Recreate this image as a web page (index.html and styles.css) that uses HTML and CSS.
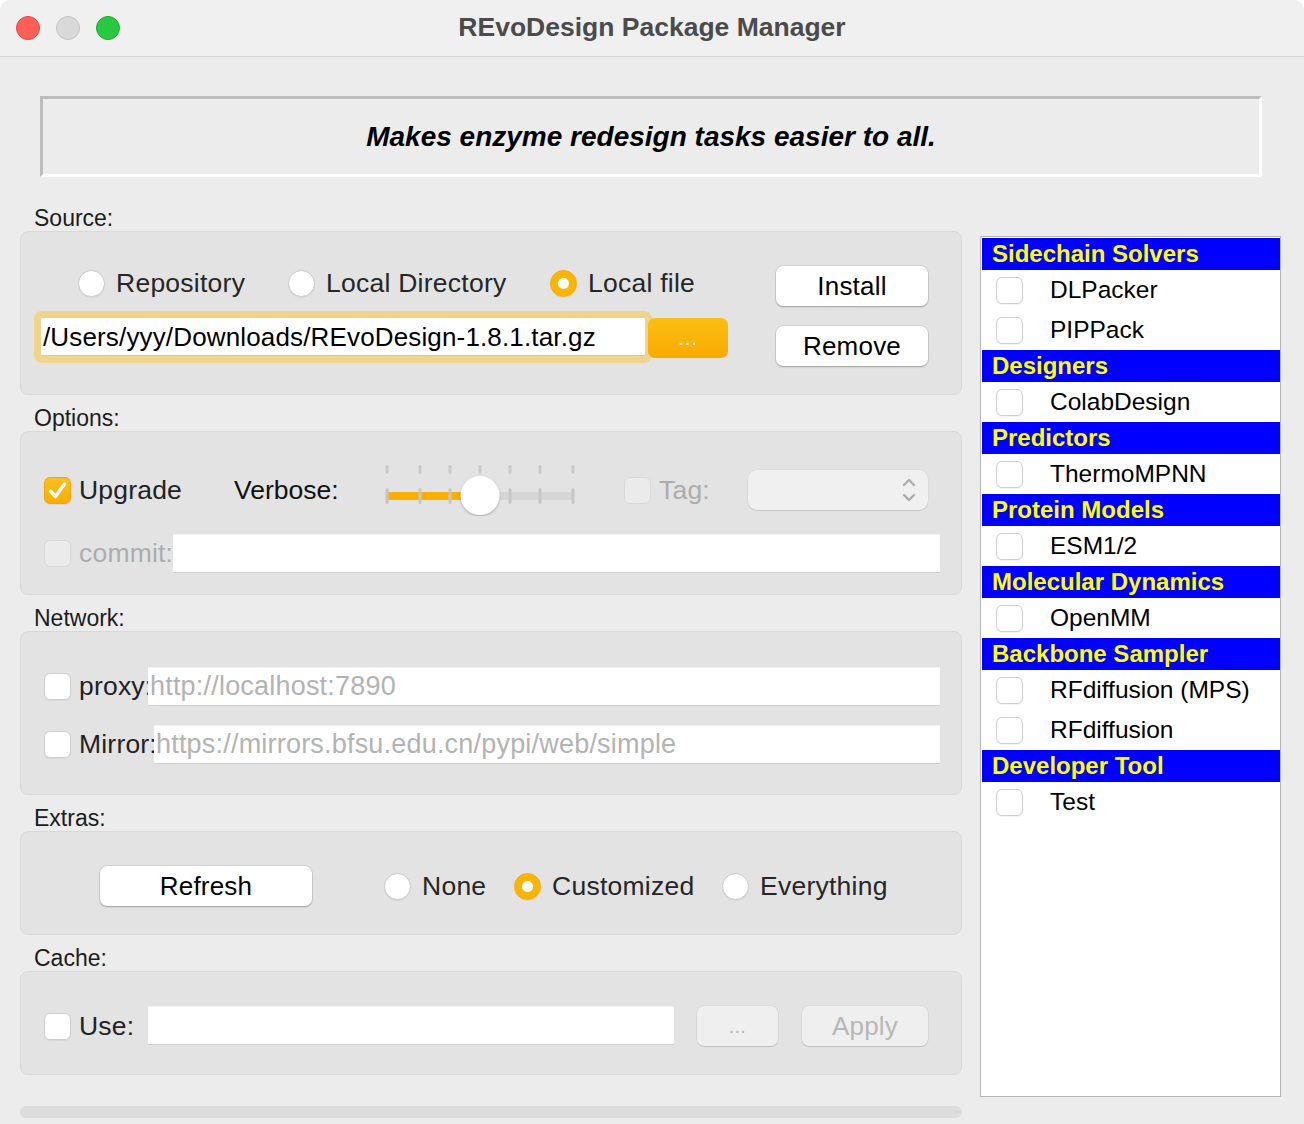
FILE: index.html
```html
<!DOCTYPE html>
<html lang="en">
<head>
    <meta charset="UTF-8">
    <title>REvoDesign Package Manager</title>
    <link rel="stylesheet" href="styles.css">
</head>
<body>

<div class="window">
    <div class="titlebar">
        <div class="lights">
            <span class="light red"></span>
            <span class="light grey"></span>
            <span class="light green"></span>
        </div>
        <div class="title">REvoDesign Package Manager</div>
        <div></div>
    </div>

    <div class="content">
        <div class="banner">Makes enzyme redesign tasks easier to all.</div>

        <div class="main">
            <div class="left">
                <!-- Source -->
                <div class="group-label">Source:</div>
                <div class="group tall source">
                    <div class="source-left">
                        <div class="radio-row">
                            <div class="radio w-repo"><span class="radio-mark"></span>Repository</div>
                            <div class="radio w-dir"><span class="radio-mark"></span>Local Directory</div>
                            <div class="radio"><span class="radio-mark on"></span>Local file</div>
                        </div>
                        <div class="path-row">
                            <div class="focus-ring">
                                <div class="path-text">/Users/yyy/Downloads/REvoDesign-1.8.1.tar.gz</div>
                            </div>
                            <div class="btn-accent">...</div>
                        </div>
                    </div>
                    <div class="source-right">
                        <div class="btn">Install</div>
                        <div class="btn">Remove</div>
                    </div>
                </div>

                <!-- Options -->
                <div class="group-label">Options:</div>
                <div class="group tall rows opts">
                    <div class="row">
                        <div class="check-item w-upgrade">
                            <span class="check on">
                                <svg width="27" height="27" viewBox="0 0 27 27"><path d="M6.5 14 L11.5 19.5 L20.5 7" fill="none" stroke="#fff" stroke-width="3.4" stroke-linecap="round" stroke-linejoin="round"/></svg>
                            </span>Upgrade
                        </div>
                        <div class="plain w-verbose">Verbose:</div>
                        <div class="slider">
                            <svg width="191" height="51" viewBox="0 0 191 51">
                                <defs>
                                    <filter id="knob" x="-30%" y="-30%" width="160%" height="160%">
                                        <feDropShadow dx="0" dy="1" stdDeviation="1.2" flood-color="#000" flood-opacity="0.3"/>
                                    </filter>
                                </defs>
                                <g fill="#c9c9c9">
                                    <rect x="0.5" y="0" width="3" height="9" rx="1.5"/>
                                    <rect x="33.5" y="0" width="3" height="9" rx="1.5"/>
                                    <rect x="63.5" y="0" width="3" height="9" rx="1.5"/>
                                    <rect x="93.5" y="0" width="3" height="9" rx="1.5"/>
                                    <rect x="123.5" y="0" width="3" height="9" rx="1.5"/>
                                    <rect x="153.5" y="0" width="3" height="9" rx="1.5"/>
                                    <rect x="186.5" y="0" width="3" height="9" rx="1.5"/>
                                </g>
                                <rect x="2" y="27" width="186" height="8" fill="#d6d6d6"/>
                                <rect x="2" y="27" width="90" height="8" fill="#f9ae00"/>
                                <g fill="#c6c6c6">
                                    <rect x="0.5" y="23" width="3" height="16" rx="1.5"/>
                                    <rect x="33.5" y="23" width="3" height="16" rx="1.5"/>
                                    <rect x="63.5" y="23" width="3" height="16" rx="1.5"/>
                                    <rect x="123.5" y="23" width="3" height="16" rx="1.5"/>
                                    <rect x="153.5" y="23" width="3" height="16" rx="1.5"/>
                                    <rect x="186.5" y="23" width="3" height="16" rx="1.5"/>
                                </g>
                                <circle cx="95" cy="30.5" r="19.5" fill="#fff" filter="url(#knob)"/>
                            </svg>
                        </div>
                        <div class="check-item muted w-tag"><span class="check off"></span>Tag:</div>
                        <div class="combo">
                            <svg width="14" height="28" viewBox="0 0 14 28"><path d="M2 9 L7 4 L12 9 M2 19 L7 24 L12 19" fill="none" stroke="#acacac" stroke-width="2.4" stroke-linecap="round" stroke-linejoin="round"/></svg>
                        </div>
                    </div>
                    <div class="row second">
                        <div class="check-item muted w-commit"><span class="check off"></span>commit:</div>
                        <div class="line-edit w-commit-in"></div>
                    </div>
                </div>

                <!-- Network -->
                <div class="group-label">Network:</div>
                <div class="group tall rows net">
                    <div class="row">
                        <div class="check-item w-proxy"><span class="check"></span>proxy:</div>
                        <div class="line-edit w-proxy-in">http://localhost:7890</div>
                    </div>
                    <div class="row second">
                        <div class="check-item w-mirror"><span class="check"></span>Mirror:</div>
                        <div class="line-edit w-mirror-in">https://mirrors.bfsu.edu.cn/pypi/web/simple</div>
                    </div>
                </div>

                <!-- Extras -->
                <div class="group-label">Extras:</div>
                <div class="group short rows extras">
                    <div class="row">
                        <div class="btn w-refresh">Refresh</div>
                        <div class="radio w-none"><span class="radio-mark"></span>None</div>
                        <div class="radio w-custom"><span class="radio-mark on"></span>Customized</div>
                        <div class="radio"><span class="radio-mark"></span>Everything</div>
                    </div>
                </div>

                <!-- Cache -->
                <div class="group-label">Cache:</div>
                <div class="group short rows cache">
                    <div class="row">
                        <div class="check-item w-proxy"><span class="check"></span>Use:</div>
                        <div class="line-edit w-cache-in"></div>
                        <div class="btn disabled w-dots">...</div>
                        <div class="btn disabled w-apply">Apply</div>
                    </div>
                </div>

                <div class="progress"></div>
            </div>

            <div class="pkg-list">
                <div class="pkg-head">Sidechain Solvers</div>
                <div class="pkg-item"><span class="check"></span>DLPacker</div>
                <div class="pkg-item"><span class="check"></span>PIPPack</div>
                <div class="pkg-head">Designers</div>
                <div class="pkg-item"><span class="check"></span>ColabDesign</div>
                <div class="pkg-head">Predictors</div>
                <div class="pkg-item"><span class="check"></span>ThermoMPNN</div>
                <div class="pkg-head">Protein Models</div>
                <div class="pkg-item"><span class="check"></span>ESM1/2</div>
                <div class="pkg-head">Molecular Dynamics</div>
                <div class="pkg-item"><span class="check"></span>OpenMM</div>
                <div class="pkg-head">Backbone Sampler</div>
                <div class="pkg-item"><span class="check"></span>RFdiffusion (MPS)</div>
                <div class="pkg-item"><span class="check"></span>RFdiffusion</div>
                <div class="pkg-head">Developer Tool</div>
                <div class="pkg-item"><span class="check"></span>Test</div>
            </div>
        </div>
    </div>
</div>

</body>
</html>
```

FILE: styles.css
```css
* {
    box-sizing: border-box;
}

body {
    margin: 0;
    background-color: #fff;
    font-family: 'Liberation Sans', Arial, sans-serif;
}

.window {
    width: 1304px;
    height: 1124px;
    background-color: #ececec;
    border-radius: 11px 11px 0 0;
    overflow: hidden;
}

/* title bar */
.titlebar {
    height: 57px;
    background-color: #f0f0f0;
    border-bottom: 1px solid #d5d5d5;
    display: grid;
    grid-template-columns: 1fr auto 1fr;
    align-items: center;
}

.lights {
    display: flex;
    gap: 16px;
    padding-left: 16px;
}

.light {
    width: 24px;
    height: 24px;
    border-radius: 50%;
}

.red {
    background-color: #ff5f57;
    border: 1px solid #e2463f;
}

.grey {
    background-color: #d9d9d9;
    border: 1px solid #c3c3c3;
}

.green {
    background-color: #28c840;
    border: 1px solid #1eac2c;
}

.title {
    font-weight: bold;
    font-size: 26.5px;
    color: #4b4b4b;
    padding-bottom: 2px;
}

/* banner */
.content {
    padding-top: 39px;
}

.banner {
    margin: 0 42px 0 40px;
    height: 81px;
    border: 3px solid;
    border-color: #bdbdbd #fff #fff #bdbdbd;
    display: flex;
    align-items: center;
    justify-content: center;
    font-style: italic;
    font-weight: bold;
    font-size: 28px;
    color: #000;
}

.main {
    display: flex;
    align-items: flex-start;
    gap: 18px;
    padding: 28px 23px 0 20px;
}

.left {
    width: 942px;
}

.group-label {
    font-size: 23px;
    line-height: 26px;
    padding-left: 14px;
    color: #1c1c1c;
}

.group {
    background-color: #e3e3e3;
    border: 1px solid #d9d9d9;
    border-radius: 8px;
    margin-bottom: 10px;
}

.group.tall {
    height: 164px;
}

.group.short {
    height: 104px;
}

/* common widgets */
.radio {
    display: flex;
    align-items: center;
    gap: 11px;
    font-size: 26.5px;
    letter-spacing: 0.25px;
    color: #262626;
    white-space: nowrap;
}

.radio-mark {
    width: 27px;
    height: 27px;
    flex: none;
    border-radius: 50%;
    background-color: #fff;
    border: 1px solid #cacaca;
    box-shadow: 0 1px 1px rgba(0, 0, 0, 0.06);
}

.radio-mark.on {
    border-color: #f6aa00;
    background: radial-gradient(circle, #fff 0 5px, #fbb400 6px);
}

.check-item {
    display: flex;
    align-items: center;
    gap: 8px;
    height: 40px;
    font-size: 26.5px;
    letter-spacing: 0.2px;
    color: #222;
    white-space: nowrap;
}

.check {
    width: 27px;
    height: 27px;
    flex: none;
    border-radius: 6px;
    background-color: #fff;
    border: 1px solid #cfcfcf;
    box-shadow: 0 1px 1px rgba(0, 0, 0, 0.05);
}

.check svg {
    display: block;
    margin: -1px;
}

.check.on {
    background: linear-gradient(#fdbf22, #f9ad00);
    border-color: #efa600;
}

.check.off {
    background-color: #ebebeb;
    border-color: #d8d8d8;
    box-shadow: none;
}

.muted {
    color: #acacac;
}

.plain {
    font-size: 26.5px;
    color: #111;
}

.btn {
    width: 152px;
    height: 40px;
    background-color: #fff;
    border-radius: 7px;
    box-shadow: 0 1px 2px rgba(0, 0, 0, 0.25), 0 0 0 0.5px rgba(0, 0, 0, 0.12);
    display: flex;
    align-items: center;
    justify-content: center;
    font-size: 26px;
    letter-spacing: 0.2px;
    color: #000;
}

.btn.disabled {
    background-color: #efefef;
    color: #b7b7b7;
    box-shadow: 0 1px 1px rgba(0, 0, 0, 0.12), 0 0 0 0.5px rgba(0, 0, 0, 0.08);
}

.line-edit {
    height: 38px;
    background-color: #fff;
    border-top: 1px solid #f2f2f2;
    box-shadow: 0 1px 0 #d0d0d0;
    font-size: 27px;
    letter-spacing: 0.2px;
    line-height: 36px;
    padding-left: 2px;
    color: #b3b3b3;
    white-space: nowrap;
    overflow: hidden;
}

/* source group */
.source {
    display: flex;
}

.source-left {
    margin-left: 13px;
    width: 694px;
}

.radio-row {
    margin-top: 31px;
    height: 40px;
    display: flex;
    align-items: center;
    padding-left: 44px;
}

.w-repo {
    width: 210px;
}

.w-dir {
    width: 262px;
}

.path-row {
    margin-top: 8px;
    display: flex;
    align-items: flex-start;
}

.focus-ring {
    width: 618px;
    height: 52px;
    border: 7px solid #f0d38c;
    border-radius: 8px;
    background-color: #fff;
    box-shadow: inset 0 -1px 0 #c9c9c9;
}

.path-text {
    font-size: 26px;
    letter-spacing: 0.15px;
    line-height: 38px;
    padding-left: 2px;
    color: #000;
    white-space: nowrap;
}

.btn-accent {
    margin: 7px 0 0 -4px;
    width: 80px;
    height: 40px;
    border-radius: 7px;
    background: linear-gradient(#fcbf15, #f9aa00);
    color: #fff;
    font-size: 20px;
    letter-spacing: 1px;
    display: flex;
    align-items: center;
    justify-content: center;
}

.source-right {
    margin-left: 48px;
    padding-top: 34px;
    display: flex;
    flex-direction: column;
    gap: 20px;
}

/* row groups */
.rows {
    padding-left: 23px;
}

.opts {
    padding-top: 38px;
}

.net,
.extras,
.cache {
    padding-top: 34px;
}

.row {
    display: flex;
    align-items: center;
    height: 40px;
}

.opts .row.second {
    margin-top: 23px;
}

.net .row.second {
    margin-top: 18px;
}

.w-upgrade {
    width: 190px;
}

.w-verbose {
    width: 151px;
}

.slider {
    width: 191px;
    height: 51px;
}

.slider svg {
    display: block;
}

.w-tag {
    margin-left: 48px;
    width: 124px;
}

.combo {
    width: 180px;
    height: 40px;
    border-radius: 9px;
    background-color: #f0f0f0;
    box-shadow: 0 1px 1px rgba(0, 0, 0, 0.1), 0 0 0 0.5px rgba(0, 0, 0, 0.05);
    display: flex;
    align-items: center;
    justify-content: flex-end;
    padding-right: 12px;
}

.w-commit {
    width: 129px;
}

.w-commit-in {
    width: 767px;
}

.w-proxy {
    width: 104px;
}

.w-proxy-in {
    width: 792px;
}

.w-mirror {
    width: 110px;
}

.w-mirror-in {
    width: 786px;
}

.extras {
    padding-left: 79px;
}

.w-refresh {
    width: 212px;
    margin-right: 72px;
}

.w-none {
    width: 130px;
}

.w-custom {
    width: 208px;
}

.cache .row {
    align-items: flex-start;
}

.w-cache-in {
    width: 526px;
}

.w-dots {
    width: 81px;
    margin-left: 23px;
    font-size: 20px;
}

.w-apply {
    width: 126px;
    margin-left: 24px;
}

.progress {
    margin-top: 31px;
    height: 12px;
    background-color: #dcdcdc;
    border-radius: 6px;
}

/* package list */
.pkg-list {
    width: 301px;
    height: 861px;
    margin-top: 31px;
    background-color: #fff;
    border: 1px solid #b5b5b5;
    padding: 1px 0 0 1px;
}

.pkg-head {
    height: 32px;
    line-height: 32px;
    padding-left: 10px;
    background-color: #0000ff;
    color: #ffff00;
    font-weight: bold;
    font-size: 24px;
}

.pkg-item {
    height: 40px;
    display: flex;
    align-items: center;
    gap: 27px;
    padding-left: 14px;
    font-size: 24.5px;
    color: #000;
}
```
